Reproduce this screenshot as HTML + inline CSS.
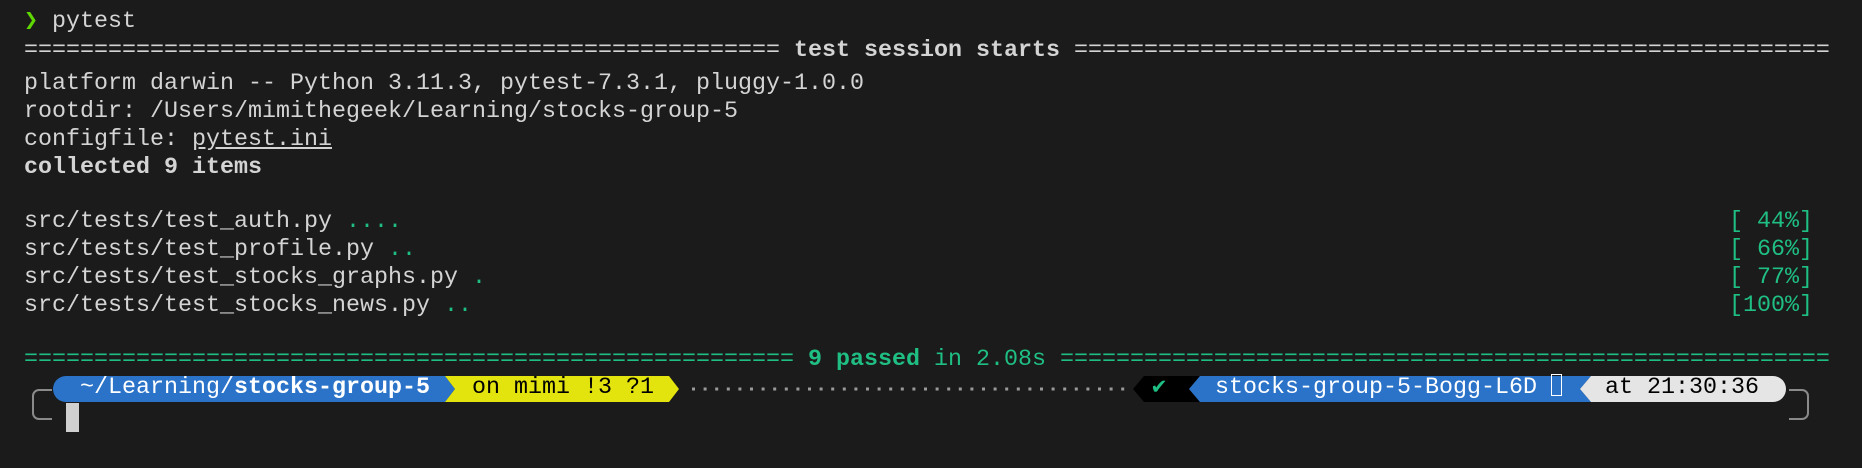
<!DOCTYPE html>
<html><head><meta charset="utf-8"><style>
html,body{margin:0;padding:0;background:#1b1b1b;width:1862px;height:468px;overflow:hidden}
.r{position:absolute;left:24px;height:28px;line-height:28px;font-family:"Liberation Mono","DejaVu Sans Mono",monospace;font-size:23.33px;color:#d4d4d4;white-space:pre}
.b{font-weight:bold}
.g{color:#1fbf84}
.p{position:absolute;left:1729px}
.t{position:absolute;height:28px;line-height:28px;font-family:"Liberation Mono","DejaVu Sans Mono",monospace;font-size:23.33px;white-space:pre;top:374px}
</style></head><body>
<div class="r" style="top:8px"><span style="color:#5fd700">❯</span> pytest</div>
<div class="r" style="top:37px">====================================================== <span class="b">test session starts</span> ======================================================</div>
<div class="r" style="top:70px">platform darwin -- Python 3.11.3, pytest-7.3.1, pluggy-1.0.0</div>
<div class="r" style="top:98px">rootdir: /Users/mimithegeek/Learning/stocks-group-5</div>
<div class="r" style="top:126px">configfile: <span style="text-decoration:underline">pytest.ini</span></div>
<div class="r b" style="top:154px">collected 9 items</div>
<div class="r" style="top:208px;width:1800px">src/tests/test_auth.py <span class="g">....</span><span class="p g" style="left:1705px">[ 44%]</span></div>
<div class="r" style="top:236px;width:1800px">src/tests/test_profile.py <span class="g">..</span><span class="p g" style="left:1705px">[ 66%]</span></div>
<div class="r" style="top:264px;width:1800px">src/tests/test_stocks_graphs.py <span class="g">.</span><span class="p g" style="left:1705px">[ 77%]</span></div>
<div class="r" style="top:292px;width:1800px">src/tests/test_stocks_news.py <span class="g">..</span><span class="p g" style="left:1705px">[100%]</span></div>
<div class="r g" style="top:346px">======================================================= <span class="b">9 passed</span> in 2.08s =======================================================</div>

<svg width="1862" height="468" style="position:absolute;left:0;top:0">
  <path d="M52 419 H39 a6 6 0 0 1 -6 -6 V396 a6 6 0 0 1 6 -6 H52" fill="none" stroke="#8a8a8a" stroke-width="2"/>
  <path d="M1789 390 H1802 a6 6 0 0 1 6 6 V413 a6 6 0 0 1 -6 6 H1789" fill="none" stroke="#8a8a8a" stroke-width="2"/>
  <path d="M66 376 H445 L455 389 L445 402 H66 a13 13 0 0 1 0 -26 Z" fill="#2a73c9"/>
  <path d="M445 376 H669 L679 389 L669 402 H445 L455 389 Z" fill="#e3e40d"/>
  <line x1="692" y1="389" x2="1132" y2="389" stroke="#9a9a9a" stroke-width="3" stroke-dasharray="3 8.6"/>
  <path d="M1144 376 H1200 L1189 389 L1200 402 H1144 L1133 389 Z" fill="#000"/>
  <path d="M1200 376 H1591 L1580 389 L1591 402 H1200 L1189 389 Z" fill="#2a73c9"/>
  <path d="M1591 376 H1773 a13 13 0 0 1 0 26 H1591 L1580 389 Z" fill="#e5e5e5"/>
  <rect x="66" y="403" width="13" height="29" fill="#d0d0d0"/>
</svg>
<div class="t" style="left:80px;color:#fff">~/Learning/<b>stocks-group-5</b></div>
<div class="t" style="left:472px;color:#000">on mimi !3 ?1</div>
<div class="t" style="left:1152px;color:#1fbf84">✔</div>
<div class="t" style="left:1215px;color:#fff">stocks-group-5-Bogg-L6D <span style="display:inline-block;width:9px;height:20px;border:1.5px solid #fff;vertical-align:-3px"></span></div>
<div class="t" style="left:1605px;color:#000">at 21:30:36</div>
</body></html>
